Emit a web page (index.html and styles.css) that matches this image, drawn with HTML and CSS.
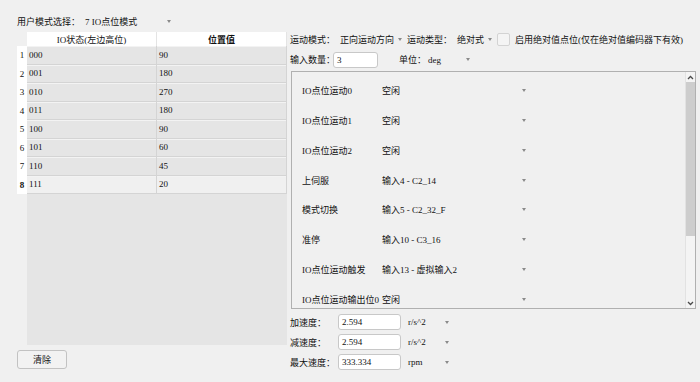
FILE: index.html
```html
<!DOCTYPE html>
<html lang="zh-CN">

<head>
    <meta charset="UTF-8">
    <title>IO点位模式</title>
    <link rel="stylesheet" href="styles.css">
</head>

<body>
    <div class="app">
        <div class="left-panel">
            <div class="mode-row">
                <span class="mode-label">用户模式选择：</span>
                <span class="combo combo-mode">7 IO点位模式<span class="arrow"></span></span>
            </div>
            <div class="io-table">
                <div class="corner"></div>
                <div class="th">IO状态(左边高位)</div>
                <div class="th th-bold">位置值</div>

                <div class="rh">1</div><div class="td">000</div><div class="td">90</div>
                <div class="rh">2</div><div class="td">001</div><div class="td">180</div>
                <div class="rh">3</div><div class="td">010</div><div class="td">270</div>
                <div class="rh">4</div><div class="td">011</div><div class="td">180</div>
                <div class="rh">5</div><div class="td">100</div><div class="td">90</div>
                <div class="rh">6</div><div class="td">101</div><div class="td">60</div>
                <div class="rh">7</div><div class="td">110</div><div class="td">45</div>
                <div class="rh rh-current">8</div><div class="td td-current">111</div><div class="td td-current">20</div>

                <div class="rh-empty"></div>
                <div class="table-fill"></div>
            </div>
            <button class="btn">清除</button>
        </div>

        <div class="right-panel">
            <div class="line">
                <span class="lbl lbl-mode">运动模式：</span>
                <span class="combo combo-dir">正向运动方向<span class="arrow"></span></span>
                <span class="lbl lbl-mode">运动类型：</span>
                <span class="combo combo-type">绝对式<span class="arrow"></span></span>
                <span class="checkbox"></span>
                <span class="check-text">启用绝对值点位(仅在绝对值编码器下有效)</span>
            </div>
            <div class="line line-count">
                <span class="lbl lbl-count">输入数量：</span>
                <span class="field field-count">3</span>
                <span class="lbl lbl-unit">单位：</span>
                <span class="combo combo-unit">deg<span class="arrow"></span></span>
            </div>

            <div class="scroll-box">
                <div class="scroll-content">
                    <div class="io-row"><span class="io-name">IO点位运动0</span><span class="combo combo-io">空闲<span class="arrow"></span></span></div>
                    <div class="io-row"><span class="io-name">IO点位运动1</span><span class="combo combo-io">空闲<span class="arrow"></span></span></div>
                    <div class="io-row"><span class="io-name">IO点位运动2</span><span class="combo combo-io">空闲<span class="arrow"></span></span></div>
                    <div class="io-row"><span class="io-name">上伺服</span><span class="combo combo-io">输入4 - C2_14<span class="arrow"></span></span></div>
                    <div class="io-row"><span class="io-name">模式切换</span><span class="combo combo-io">输入5 - C2_32_F<span class="arrow"></span></span></div>
                    <div class="io-row"><span class="io-name">准停</span><span class="combo combo-io">输入10 - C3_16<span class="arrow"></span></span></div>
                    <div class="io-row"><span class="io-name">IO点位运动触发</span><span class="combo combo-io">输入13 - 虚拟输入2<span class="arrow"></span></span></div>
                    <div class="io-row"><span class="io-name">IO点位运动输出位0</span><span class="combo combo-io">空闲<span class="arrow"></span></span></div>
                </div>
                <div class="scrollbar">
                    <div class="sb-btn sb-up">
                        <svg width="7" height="5" viewBox="0 0 7 5"><polyline points="1,4 3.5,1.5 6,4" fill="none" stroke="#4a4a4a" stroke-width="1.3"/></svg>
                    </div>
                    <div class="sb-thumb"></div>
                    <div class="sb-track"></div>
                    <div class="sb-btn sb-down">
                        <svg width="7" height="5" viewBox="0 0 7 5"><polyline points="1,1 3.5,3.5 6,1" fill="none" stroke="#4a4a4a" stroke-width="1.3"/></svg>
                    </div>
                </div>
            </div>

            <div class="speed-list">
                <div class="line speed-row">
                    <span class="lbl lbl-speed">加速度：</span>
                    <span class="field field-speed">2.594</span>
                    <span class="combo combo-speed">r/s^2<span class="arrow"></span></span>
                </div>
                <div class="line speed-row">
                    <span class="lbl lbl-speed">减速度：</span>
                    <span class="field field-speed">2.594</span>
                    <span class="combo combo-speed">r/s^2<span class="arrow"></span></span>
                </div>
                <div class="line speed-row">
                    <span class="lbl lbl-speed">最大速度：</span>
                    <span class="field field-speed">333.334</span>
                    <span class="combo combo-speed">rpm<span class="arrow"></span></span>
                </div>
            </div>
        </div>
    </div>
</body>

</html>
```

FILE: styles.css
```css
:root {
    --background-color: #f0f0f0;
    --cell-color: #e5e5e5;
    --grid-color: #d4d4d4;
    --text-color: #111;
    --arrow-color: #8a8a8a;
    --border-color: #c8c8c8;
}

body {
    margin: 0;
    padding: 0;
    width: 700px;
    height: 382px;
    overflow: hidden;
    background-color: var(--background-color);
    font-family: "Liberation Serif", "Noto Sans CJK SC", serif;
    font-size: 9px;
    color: var(--text-color);
}

.app {
    display: flex;
    flex-direction: row;
}

/* left side: mode + table */

.left-panel {
    width: 290px;
    box-sizing: border-box;
    padding: 13px 0 0 17px;
    display: flex;
    flex-direction: column;
    align-items: flex-start;
}

.mode-row {
    height: 16px;
    display: flex;
    align-items: center;
    margin-bottom: 3px;
    white-space: nowrap;
}

.mode-label {
    width: 68px;
}

.io-table {
    display: grid;
    grid-template-columns: 10px 130px 130px;
    grid-template-rows: 14px repeat(8, 18.5px) 151px;
    width: 270px;
}

.corner {
    background-color: var(--background-color);
}

.th {
    background-color: #fff;
    display: flex;
    align-items: center;
    justify-content: center;
    border-right: 1px solid #e4e4e4;
    white-space: nowrap;
}

.th-bold {
    font-weight: bold;
}

.rh {
    background-color: #fff;
    display: flex;
    align-items: center;
    justify-content: center;
}

.rh-current {
    font-weight: bold;
}

.td {
    background-color: var(--cell-color);
    border-right: 1px solid var(--grid-color);
    border-bottom: 1px solid var(--grid-color);
    box-shadow: inset 0 1px 0 #f3f3f3;
    display: flex;
    align-items: center;
    padding-left: 2px;
}

.td-current {
    background-color: #f0f0f0;
}

.table-fill {
    grid-column: 2 / 4;
    background-color: var(--cell-color);
}

.btn {
    margin-top: 5px;
    width: 50px;
    height: 19px;
    padding: 0;
    border: 1px solid #c2c2c2;
    border-radius: 3px;
    background-color: #f2f2f2;
    font-family: inherit;
    font-size: 9px;
    color: var(--text-color);
}

/* right side */

.right-panel {
    width: 410px;
    padding-top: 32px;
    display: flex;
    flex-direction: column;
}

.line {
    height: 15px;
    display: flex;
    align-items: center;
    white-space: nowrap;
}

.line-count {
    margin-top: 5px;
}

.lbl {
    flex: none;
}

.lbl-mode {
    width: 50px;
}

.lbl-count {
    width: 43px;
}

.lbl-unit {
    width: 29px;
    margin-left: 21px;
}

.lbl-speed {
    width: 48px;
}

.combo {
    display: inline-flex;
    align-items: center;
    flex: none;
    white-space: nowrap;
}

.arrow {
    margin-left: auto;
    width: 0;
    height: 0;
    border-left: 2.5px solid transparent;
    border-right: 2.5px solid transparent;
    border-top: 3px solid var(--arrow-color);
}

.combo-mode {
    width: 86px;
}

.combo-dir {
    width: 62px;
    margin-right: 5px;
}

.combo-type {
    width: 35px;
    margin-right: 5px;
}

.combo-unit {
    width: 42px;
}

.combo-io {
    width: 144px;
}

.combo-speed {
    width: 41px;
    margin-left: 7px;
}

.checkbox {
    width: 11px;
    height: 11px;
    border: 1px solid #d3d3d3;
    border-radius: 2px;
    background-color: #f4f4f4;
    margin-right: 5px;
    flex: none;
}

.field {
    box-sizing: border-box;
    height: 16px;
    background-color: #fff;
    border: 1px solid var(--border-color);
    border-radius: 3px;
    padding-left: 3px;
    display: flex;
    align-items: center;
    flex: none;
}

.field-count {
    width: 45px;
}

.field-speed {
    width: 63px;
}

/* scroll area with io rows */

.scroll-box {
    margin-top: 4px;
    margin-left: 1px;
    width: 405px;
    height: 238px;
    box-sizing: border-box;
    border: 1px solid #b0b0b0;
    display: flex;
    flex-direction: row;
}

.scroll-content {
    flex: 1;
    overflow: hidden;
    padding: 4px 0 0 10px;
}

.io-row {
    height: 29.75px;
    display: flex;
    align-items: center;
    white-space: nowrap;
}

.io-name {
    width: 80px;
}

.scrollbar {
    width: 10px;
    display: flex;
    flex-direction: column;
    background-color: #f4f4f4;
    border-left: 1px solid #e2e2e2;
    box-sizing: border-box;
}

.sb-btn {
    display: flex;
    align-items: center;
    justify-content: center;
}

.sb-up {
    height: 10px;
}

.sb-down {
    height: 9px;
}

.sb-thumb {
    height: 154px;
    background-color: #cdcdcd;
}

.sb-track {
    flex: 1;
}

.speed-list {
    margin-top: 5px;
    display: flex;
    flex-direction: column;
    gap: 4px;
}

.speed-row {
    height: 16px;
}
```
